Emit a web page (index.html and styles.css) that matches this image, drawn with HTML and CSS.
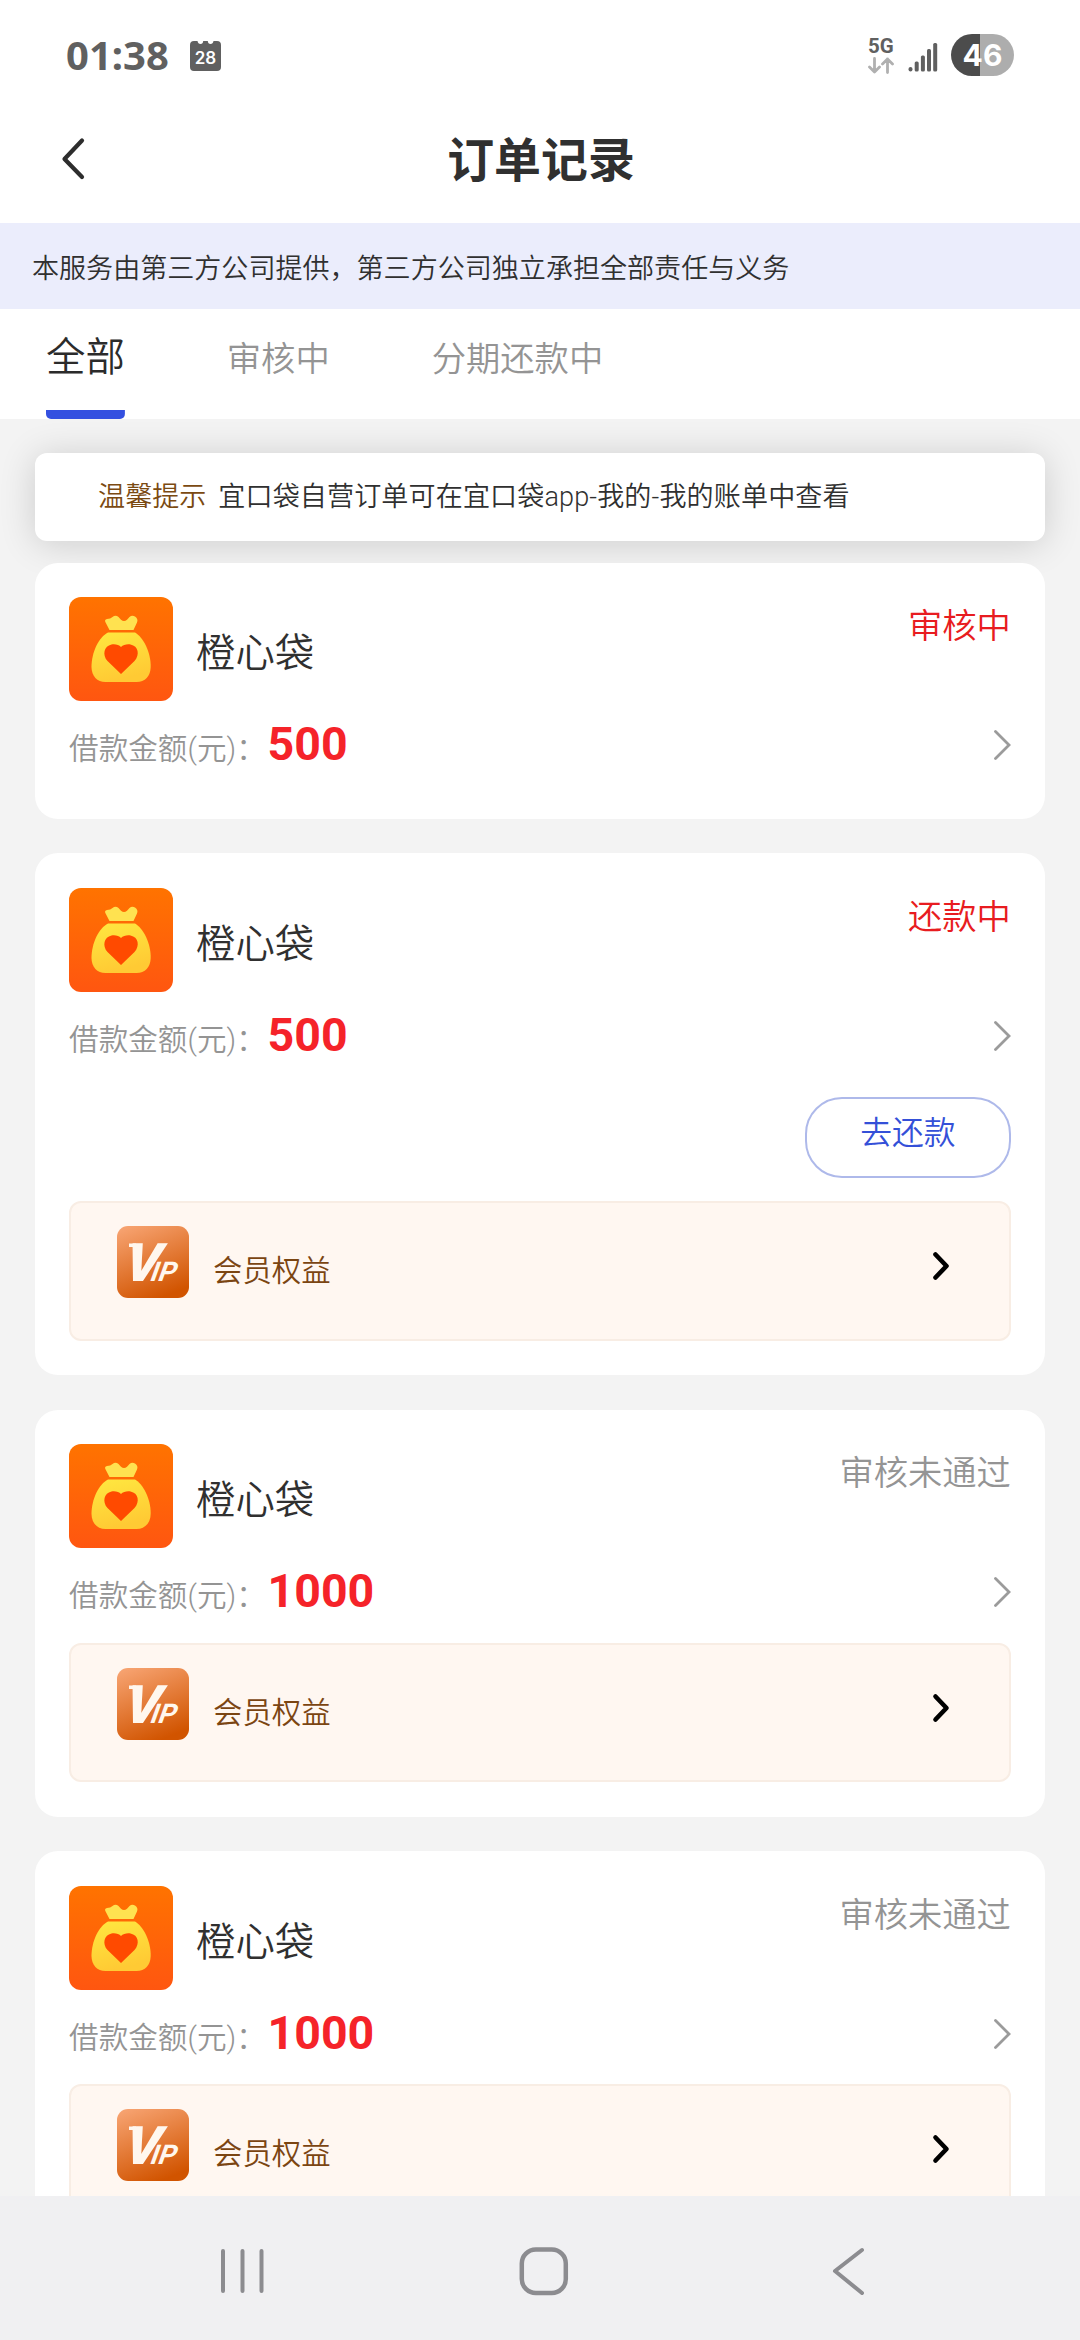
FILE: index.html
```html
<!DOCTYPE html>
<html lang="zh-CN">
<head>
<meta charset="utf-8">
<title>订单记录</title>
<link rel="stylesheet" href="styles.css">
</head>
<body>
<svg class="defs" aria-hidden="true">
  <defs>
    <linearGradient id="logo-bg" x1="0" y1="0" x2="0" y2="1"><stop offset="0" stop-color="#ff7300"/><stop offset="1" stop-color="#ff5610"/></linearGradient>
    <linearGradient id="bag-fill" x1="0" y1="0" x2="0.3" y2="1"><stop offset="0" stop-color="#ffe840"/><stop offset="1" stop-color="#ffca34"/></linearGradient>
    <linearGradient id="vip-bg" x1="0.2" y1="0" x2="0.6" y2="1"><stop offset="0" stop-color="#f6a16e"/><stop offset="1" stop-color="#d15400"/></linearGradient>
  </defs>
  <symbol id="logo" viewBox="0 0 104 104">
    <rect width="104" height="104" rx="12" fill="url(#logo-bg)"/>
    <path d="M40.5 33 L36.6 25.5 Q35 22.500 38 22 Q41.500 22 43.500 20 Q46.500 17.500 49.500 20 L52 22.700 Q55 25.500 58 22.700 L60.500 20 Q63 18 66 19.500 Q69.500 22 68 25.500 L64.500 33 Z" fill="#ffe250"/>
    <path d="M39 35.500 H66 C74 40 82 55 81.700 70 C81.500 79 76 85 67.500 85 H36.500 C28 85 22.700 79 22.500 70 C22.500 55 30 40 39 35.500 Z" fill="url(#bag-fill)"/>
    <path d="M52 77 L38.500 64 C33 58 35 49 42.500 47.500 C46.500 46.800 50 48 52 50 C54 48 58 46.800 61.500 47.500 C69.500 49 71 58 65.500 64 Z" fill="#ff4a00"/>
  </symbol>
  <symbol id="vip" viewBox="0 0 72 72">
    <rect width="72" height="72" rx="11" fill="url(#vip-bg)"/>
    <path d="M12 17.500 H19 V21 H12 Z" fill="#fff7ee"/>
    <text transform="translate(3.500 55) skewX(-18)" class="vip-v" textLength="35" lengthAdjust="spacingAndGlyphs">V</text>
    <text transform="translate(31.500 55) skewX(-20)" class="vip-ip">IP</text>
  </symbol>
  <symbol id="next" viewBox="0 0 17 30"><path d="M1.500 1.500 L15 15 L1.500 28.500" fill="none" stroke="#9b9b9b" stroke-width="2.800" stroke-linecap="round"/></symbol>
  <symbol id="next-bold" viewBox="0 0 18 30"><path d="M3.500 3.500 L14.500 15 L3.500 26.500" fill="none" stroke="#000" stroke-width="4.600" stroke-linecap="round" stroke-linejoin="round"/></symbol>
</svg>

<div class="screen">
  <div class="status-bar">
    <span class="clock">01:38</span>
    <svg class="calendar" viewBox="0 0 31 31"><path d="M4 1 H7.500 Q8 4 10.500 4 Q13 4 13.200 1 H17.800 Q18 4 20.500 4 Q23 4 23.500 1 H27 Q31 1 31 5 V27 Q31 31 27 31 H4 Q0 31 0 27 V5 Q0 1 4 1Z" fill="#606060"/><text x="15.500" y="23.500" text-anchor="middle" class="calendar-day">28</text></svg>
    <div class="network">
      <span class="network-type">5G</span>
      <svg width="26" height="17" viewBox="0 0 26 17" fill="none" stroke="#b0b0b0" stroke-width="2.800" stroke-linecap="round" stroke-linejoin="round"><path d="M6.500 1.500V15M1.500 10L6.500 15L11.500 10M19.500 15.500V2M14.500 7L19.500 2L24.500 7"/></svg>
    </div>
    <svg class="signal" viewBox="0 0 30 30" fill="#606060"><rect x="0.500" y="25" width="4" height="4.500" rx="2"/><rect x="6.700" y="19.500" width="4" height="10" rx="1.500"/><rect x="12.900" y="13.500" width="4" height="16" rx="1.500"/><rect x="19" y="7" width="4" height="22.500" rx="1.500"/><rect x="25.200" y="1" width="4" height="28.500" rx="1.500"/></svg>
    <div class="battery">46</div>
  </div>

  <header class="title-bar">
    <svg class="back" viewBox="0 0 24 44"><path d="M21 3.500 L3.500 22 L21 40" fill="none" stroke="#2d2d2d" stroke-width="4.200" stroke-linecap="round" stroke-linejoin="round"/></svg>
    <h1 class="title">订单记录</h1>
  </header>

  <div class="notice">本服务由第三方公司提供，第三方公司独立承担全部责任与义务</div>

  <nav class="tabs">
    <span class="tab tab-active">全部</span>
    <span class="tab">审核中</span>
    <span class="tab">分期还款中</span>
  </nav>

  <main class="list">
    <div class="tip"><span class="tip-label">温馨提示</span><span class="tip-text">宜口袋自营订单可在宜口袋app-我的-我的账单中查看</span></div>

    <article class="card">
      <div class="card-head"><svg class="logo"><use href="#logo"/></svg><span class="name">橙心袋</span><span class="state state-live">审核中</span></div>
      <div class="amount-row"><span class="label">借款金额(元)：</span><span class="amount">500</span><svg class="next"><use href="#next"/></svg></div>
    </article>

    <article class="card">
      <div class="card-head"><svg class="logo"><use href="#logo"/></svg><span class="name">橙心袋</span><span class="state state-live">还款中</span></div>
      <div class="amount-row"><span class="label">借款金额(元)：</span><span class="amount">500</span><svg class="next"><use href="#next"/></svg></div>
      <button class="repay">去还款</button>
      <div class="member"><svg class="vip"><use href="#vip"/></svg><span class="member-text">会员权益</span><svg class="member-next"><use href="#next-bold"/></svg></div>
    </article>

    <article class="card">
      <div class="card-head"><svg class="logo"><use href="#logo"/></svg><span class="name">橙心袋</span><span class="state">审核未通过</span></div>
      <div class="amount-row"><span class="label">借款金额(元)：</span><span class="amount">1000</span><svg class="next"><use href="#next"/></svg></div>
      <div class="member"><svg class="vip"><use href="#vip"/></svg><span class="member-text">会员权益</span><svg class="member-next"><use href="#next-bold"/></svg></div>
    </article>

    <article class="card">
      <div class="card-head"><svg class="logo"><use href="#logo"/></svg><span class="name">橙心袋</span><span class="state">审核未通过</span></div>
      <div class="amount-row"><span class="label">借款金额(元)：</span><span class="amount">1000</span><svg class="next"><use href="#next"/></svg></div>
      <div class="member"><svg class="vip"><use href="#vip"/></svg><span class="member-text">会员权益</span><svg class="member-next"><use href="#next-bold"/></svg></div>
    </article>
  </main>

  <footer class="system-nav">
    <svg width="46" height="50" viewBox="0 0 46 50" stroke="#8c8c90" stroke-width="4" stroke-linecap="round"><path d="M3 4V44M22.500 4V44M41.500 4V44"/></svg>
    <svg width="50" height="50" viewBox="0 0 50 50" fill="none" stroke="#8c8c90" stroke-width="4.500"><rect x="2.800" y="2.500" width="44" height="43.500" rx="14"/></svg>
    <svg width="34" height="50" viewBox="0 0 34 50" fill="none" stroke="#8c8c90" stroke-width="4" stroke-linecap="round" stroke-linejoin="round"><path d="M31 3L4 24L31 46"/></svg>
  </footer>
</div>
</body>
</html>
```
FILE: styles.css
```css
* { box-sizing: border-box; }

body {
  margin: 0;
  background: #fff;
  font-family: Roboto, "Noto Sans CJK SC", sans-serif;
  font-weight: 350;
  color: #303030;
}

svg { display: block; flex: none; }
.defs { position: absolute; width: 0; height: 0; }

.screen {
  display: flex;
  flex-direction: column;
  width: 1080px;
  height: 2340px;
  overflow: hidden;
}

/* Status bar */
.status-bar {
  display: flex;
  flex: none;
  height: 110px;
  padding: 34px 66px 0 66px;
}
.clock {
  width: 124px;
  font: 700 40px/42px "Noto Sans", sans-serif;
  color: #606060;
}
.calendar { width: 31px; height: 31px; margin-top: 6px; }
.calendar-day { font: 600 17px Inter, sans-serif; fill: #fff; }
.network { margin: 2px 14px 0 auto; color: #606060; }
.network-type { display: block; font: 700 20.5px/21px Roboto, sans-serif; }
.signal { width: 30px; height: 30px; margin: 8px 13px 0 0; }
.battery {
  width: 63px;
  height: 42px;
  border-radius: 21px;
  background: linear-gradient(90deg, #4c4c4c 46%, #adadad 46%);
  color: #fff;
  font: 700 30px/42px Inter, sans-serif;
  text-align: center;
}

/* Title bar */
.title-bar {
  display: grid;
  grid-template-columns: 90px 1fr 90px;
  flex: none;
  align-items: center;
  height: 113px;
  padding: 0 0 16px;
}
.back { width: 24px; height: 44px; margin-left: 61px; }
.title {
  margin: 4px 0 0 2px;
  font-size: 46.900px;
  line-height: 60px;
  font-weight: 700;
  text-align: center;
}

.notice {
  flex: none;
  height: 86px;
  padding-left: 32px;
  background: #ebedfc;
  font-size: 27.050px;
  line-height: 92px;
}

/* Tabs */
.tabs {
  display: flex;
  flex: none;
  align-items: flex-start;
  height: 110px;
  padding-left: 46px;
}
.tab {
  height: 110px;
  margin-right: 102px;
  font-size: 34.3px;
  line-height: 100px;
  color: #949494;
}
.tab-active {
  border-bottom: 9px solid transparent;
  background: linear-gradient(#3450e0, #3450e0) bottom / 100% 9px no-repeat border-box;
  border-radius: 5px;
  font-size: 39.4px;
  line-height: 97px;
  color: #2b2b2b;
}

/* Order list */
.list {
  flex: 1;
  min-height: 0;
  overflow: hidden;
  padding: 33.700px 34.600px 0;
  background: #f3f3f3;
}
.tip {
  display: flex;
  gap: 12px;
  height: 88.600px;
  margin-bottom: 21.600px;
  padding-left: 63.500px;
  border-radius: 12px;
  background: #fff;
  box-shadow: 0 3px 36px rgba(0, 0, 0, 0.16);
  font-size: 27.050px;
  line-height: 88px;
}
.tip-label { color: #7b4a12; }
.tip-text { letter-spacing: 0.130px; }

.card {
  margin-bottom: 34.400px;
  padding: 34.500px;
  border-radius: 23px;
  background: #fff;
}
.card-head { display: flex; height: 104px; }
.logo { width: 104px; height: 104px; }
.name { margin-left: 23px; font-size: 39.400px; line-height: 114px; }
.state { margin-left: auto; font-size: 34.300px; line-height: 59px; color: #949494; }
.state-live { color: #e81c20; }

.amount-row {
  display: flex;
  align-items: flex-start;
  height: 83px;
  padding-top: 16px;
}
.label { font-size: 29.600px; line-height: 64px; color: #949494; }
.amount { margin-left: 1.800px; font-size: 46.500px; line-height: 54px; font-weight: 700; color: #f52329; }
.next { width: 17px; height: 30px; margin: 13px 0 0 auto; }

.repay {
  display: block;
  width: 206px;
  height: 81px;
  margin: 22.500px 0 23px auto;
  padding: 0 0 10px;
  border: 2.900px solid #aeb9ea;
  border-radius: 37px;
  background: #fff;
  color: #3450d8;
  font: inherit;
  font-size: 31.800px;
  line-height: 60px;
}

.member {
  display: flex;
  height: 139.700px;
  margin-top: 11.200px;
  padding: 23px 60px 0 46px;
  border: 2px solid #f8ede4;
  border-radius: 12px;
  background: #fff7f1;
}
.vip { width: 72px; height: 72px; }
.vip-v { font: 900 53px Roboto, sans-serif; fill: #fff7ee; }
.vip-ip { font: 700 27px Roboto, sans-serif; fill: #fff7ee; }
.member-text { margin-left: 24px; font-size: 29.400px; line-height: 90px; color: #7b4512; }
.member-next { width: 18px; height: 30px; margin: 25px -1px 0 auto; }

/* System navigation */
.system-nav {
  display: grid;
  grid-template-columns: 299px 312px 1fr;
  flex: none;
  height: 144px;
  padding: 51px 0 0 219.500px;
  background: #f0f0f2;
}
```
